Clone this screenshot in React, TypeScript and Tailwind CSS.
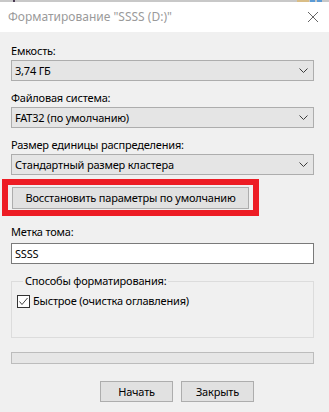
import React from "react";

const font = { fontFamily: '"Noto Sans", "Liberation Sans", sans-serif' };

const Chevron = () => (
    <svg width="9" height="5" viewBox="0 0 9 5" className="shrink-0">
        <path d="M0.5 0.5 L4.5 4.5 L8.5 0.5" fill="none" stroke="#3c3c3c" strokeWidth="1" />
    </svg>
);

const Select: React.FC<{ value: string }> = ({ value }) => (
    <div className="h-[21px] w-[303px] border border-[#adadad] bg-[#e5e5e5] flex items-center justify-between pl-[3px] pr-[5px] leading-[16px]">
        <span>{value}</span>
        <Chevron />
    </div>
);

const Label: React.FC<{ text: string; className?: string }> = ({ text, className }) => (
    <div className={`h-[16px] leading-[16px] ${className ?? ""}`}>{text}</div>
);

const Button: React.FC<{ text: string; className?: string }> = ({ text, className }) => (
    <button className={`h-[21px] border border-[#adadad] bg-[#e1e1e1] leading-[16px] text-black whitespace-nowrap tracking-[-0.2px] flex items-center justify-center ${className ?? ""}`}>
        {text}
    </button>
);

export default function App() {
    return (
        <div className="w-[329px] h-[412px] bg-[#f0f0f0] text-[11px] text-black overflow-hidden" style={font}>
            {/* strip from the window behind */}
            <div className="h-[2px] bg-[#c8c8c8] flex">
                <div className="ml-[13px] w-[2px] bg-[#4a3a52]" />
                <div className="ml-[282px] w-[12px] bg-[#d9bd86]" />
                <div className="ml-[1px] w-[5px] bg-[#5b9bd5]" />
                <div className="ml-[2px] w-[5px] bg-[#5b9bd5]" />
            </div>

            {/* title bar */}
            <div className="h-[30px] bg-white flex items-center justify-between pl-[8px] pr-[11px]">
                <span className="text-[#9a9a9a] text-[12px] leading-[16px]">Форматирование "SSSS (D:)"</span>
                <svg width="10" height="10" viewBox="0 0 10 10">
                    <path d="M0 0 L10 10 M10 0 L0 10" stroke="#555" strokeWidth="0.9" />
                </svg>
            </div>

            <div className="px-[11px] flex flex-col tracking-[-0.2px]">
                <Label text="Емкость:" className="mt-[11px]" />
                <div className="mt-[1px]"><Select value="3,74 ГБ" /></div>

                <Label text="Файловая система:" className="mt-[9px]" />
                <div className="mt-[1px]"><Select value="FAT32 (по умолчанию)" /></div>

                <Label text="Размер единицы распределения:" className="mt-[9px]" />
                <div className="mt-[1px]"><Select value="Стандартный размер кластера" /></div>

                {/* highlighted restore button */}
                <div className="mt-[4px] -ml-[9px] w-[257px] h-[37px] border-[6px] border-[#ed1c24] pl-[4px] pt-[2px]">
                    <Button text="Восстановить параметры по умолчанию" className="w-[237px] h-[22px]" />
                </div>

                <Label text="Метка тома:" className="mt-[8px]" />
                <div className="mt-[3px] h-[21px] w-[303px] border border-[#7a7a7a] bg-white pl-[3px] leading-[19px]">
                    SSSS
                </div>

                <fieldset className="mt-[9px] w-[303px] h-[65px] border border-[#dcdcdc] pl-[5px]">
                    <legend className="ml-[6px] px-[2px] leading-[16px]">Способы форматирования:</legend>
                    <label className="mt-[4px] h-[16px] flex items-center gap-[3px]">
                        <span className="w-[13px] h-[13px] border border-[#333] bg-white flex items-center justify-center">
                            <svg width="11" height="11" viewBox="0 0 11 11">
                                <path d="M1.5 5.5 L4 8.5 L9.5 2" fill="none" stroke="#444" strokeWidth="1" />
                            </svg>
                        </span>
                        <span className="leading-[16px]">Быстрое (очистка оглавления)</span>
                    </label>
                </fieldset>

                <div className="mt-[14px] w-[303px] h-[12px] border border-[#bcbcbc] bg-[#e6e6e6]" />

                <div className="mt-[17px] ml-[89px] flex gap-[8px]">
                    <Button text="Начать" className="w-[73px]" />
                    <Button text="Закрыть" className="w-[73px]" />
                </div>
            </div>
        </div>
    );
}
